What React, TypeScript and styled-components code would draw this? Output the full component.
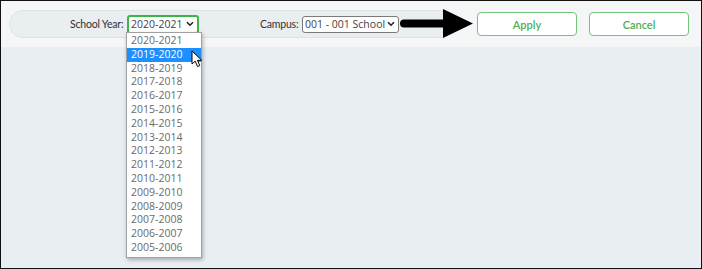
import styled, { createGlobalStyle } from 'styled-components';

const GlobalStyle = createGlobalStyle`
  html, body {
    margin: 0;
    padding: 0;
    background: #ffffff;
  }
  * {
    box-sizing: border-box;
  }
`;

const years = [
    '2020-2021', '2019-2020', '2018-2019', '2017-2018', '2016-2017', '2015-2016',
    '2014-2015', '2013-2014', '2012-2013', '2011-2012', '2010-2011', '2009-2010',
    '2008-2009', '2007-2008', '2006-2007', '2005-2006',
];

const Frame = styled.div`
  position: relative;
  width: 702px;
  height: 269px;
  border: 1px solid #111;
  background: #e8eef2;
  display: flex;
  flex-direction: column;
  overflow: hidden;
  font-family: 'Lato', 'Open Sans', sans-serif;
`;

const TopBar = styled.div`
  height: 46px;
  background: #f5f6f7;
  display: flex;
  align-items: center;
  padding: 0 0 0 8px;
`;

const FilterPill = styled.div`
  width: 445px;
  height: 28px;
  border: 1px solid #dde2e5;
  border-radius: 14px;
  background: #e9eef1;
  display: flex;
  align-items: center;
  padding-left: 60px;
`;

const Field = styled.div<{ $offset?: number }>`
  display: flex;
  align-items: center;
  gap: 4px;
  margin-left: ${(p) => p.$offset ?? 0}px;
`;

const Label = styled.span<{ $width: number }>`
  width: ${(p) => p.$width}px;
  flex-shrink: 0;
  white-space: nowrap;
  text-align: right;
  font-size: 10.5px;
  letter-spacing: -0.2px;
  color: #333;
`;

const Select = styled.div<{ $focused?: boolean; $width: number }>`
  width: ${(p) => p.$width}px;
  flex-shrink: 0;
  height: ${(p) => (p.$focused ? 19 : 17)}px;
  border: ${(p) => (p.$focused ? '2px solid #3db547' : '1px solid #7a7a7a')};
  border-radius: 3px;
  background: #fff;
  display: flex;
  align-items: center;
  justify-content: space-between;
  padding: 0 3px 0 2px;
  white-space: nowrap;
  font-family: 'Open Sans', sans-serif;
  font-size: 10.5px;
  color: #444;
  svg {
    flex-shrink: 0;
  }
`;

const Chevron = () => (
    <svg width="8" height="6" viewBox="0 0 8 6">
        <path d="M1 1.2 L4 4.2 L7 1.2" fill="none" stroke="#222" strokeWidth="1.6" />
    </svg>
);

const ButtonRow = styled.div`
  display: flex;
  gap: 12px;
  margin-left: 23px;
`;

const Button = styled.div`
  width: 100px;
  height: 24px;
  border: 1px solid #74c47a;
  border-radius: 4px;
  background: #fff;
  display: flex;
  align-items: center;
  justify-content: center;
  font-size: 11px;
  font-weight: 600;
  color: #4cae52;
`;

const Body = styled.div`
  flex: 1;
  background: #e8eef2;
`;

const YearList = styled.ul`
  position: absolute;
  left: 125px;
  top: 31px;
  width: 76px;
  margin: 0;
  padding: 1px 0 2px;
  list-style: none;
  background: #fff;
  border: 1px solid #a0a0a0;
  box-shadow: 1px 2px 4px rgba(0, 0, 0, 0.28);
  font-family: 'Open Sans', sans-serif;
  font-size: 10.5px;
`;

const YearItem = styled.li<{ $active?: boolean }>`
  height: 13.8px;
  line-height: 13.8px;
  padding-left: 4px;
  color: ${(p) => (p.$active ? '#fff' : '#6a6a6a')};
  background: ${(p) => (p.$active ? '#1e8fff' : 'transparent')};
`;

const Pointer = styled.svg`
  position: absolute;
  left: 190px;
  top: 49px;
`;

const Arrow = styled.svg`
  position: absolute;
  left: 398px;
  top: 7px;
`;

export default function App() {
    return (
        <>
            <GlobalStyle />
            <Frame>
                <TopBar>
                    <FilterPill>
                        <Field>
                            <Label $width={53}>School Year:</Label>
                            <Select $focused $width={72}>
                                <span>2020-2021</span>
                                <Chevron />
                            </Select>
                        </Field>
                        <Field $offset={61}>
                            <Label $width={38}>Campus:</Label>
                            <Select $width={97}>
                                <span>001 - 001 School</span>
                                <Chevron />
                            </Select>
                        </Field>
                    </FilterPill>
                    <ButtonRow>
                        <Button>Apply</Button>
                        <Button>Cancel</Button>
                    </ButtonRow>
                </TopBar>
                <Body />

                <YearList>
                    {years.map((y, i) => (
                        <YearItem key={y} $active={i === 1}>
                            {y}
                        </YearItem>
                    ))}
                </YearList>

                <Pointer width="14" height="18" viewBox="0 0 14 18">
                    <path d="M1 1 L1 14 L4.2 11.2 L6.6 16.6 L8.8 15.6 L6.5 10.4 L10.8 10.2 Z" fill="#fff" stroke="#000" strokeWidth="1" strokeLinejoin="round" />
                </Pointer>

                <Arrow width="76" height="32" viewBox="0 0 76 32">
                    <path d="M5 11.5 L44 11.5 L44 1 L74 15.5 L44 30 L44 19.5 L5 19.5 A4 4 0 0 1 5 11.5 Z" fill="#000" />
                </Arrow>
            </Frame>
        </>
    );
}
